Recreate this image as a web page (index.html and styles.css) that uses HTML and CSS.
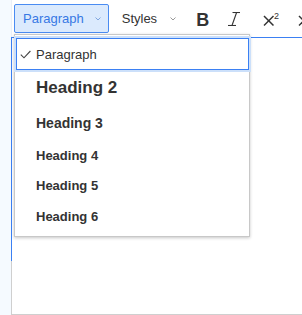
FILE: index.html
```html
<!DOCTYPE html>
<html>
  <head>
    <meta charset="UTF-8">
    <meta name="viewport" content="width=device-width, initial-scale=1.0">
    <title>Heading dropdown</title>
    <link rel="stylesheet" href="styles.css">
  </head>
  <body>

    <div class="page">
      <div class="gutter"></div>

      <div class="editor">
        <!-- toolbar -->
        <div class="toolbar">
          <button class="tb-btn tb-dropdown is-open" type="button">
            <span class="tb-label">Paragraph</span>
            <svg class="chev" width="6" height="4" viewBox="0 0 6 4"><polyline points="0.5,0.5 3,3 5.5,0.5" /></svg>
          </button>
          <button class="tb-btn tb-dropdown tb-styles" type="button">
            <span class="tb-label">Styles</span>
            <svg class="chev" width="6" height="4" viewBox="0 0 6 4"><polyline points="0.5,0.5 3,3 5.5,0.5" /></svg>
          </button>
          <button class="tb-btn tb-bold" type="button"><span>B</span></button>
          <button class="tb-btn tb-italic" type="button">
            <svg width="17" height="14" viewBox="0 0 17 14">
              <line x1="4.5" y1="0.5" x2="12" y2="0.5" />
              <line x1="0" y1="13.5" x2="8" y2="13.5" />
              <line x1="8.6" y1="0.5" x2="4" y2="13.5" />
            </svg>
          </button>
          <button class="tb-btn tb-sup" type="button">
            <svg width="17" height="17" viewBox="0 0 17 17">
              <line x1="1" y1="6" x2="10.5" y2="15.5" />
              <line x1="10.5" y1="6" x2="1" y2="15.5" />
              <text x="11" y="9">2</text>
            </svg>
          </button>
          <button class="tb-btn tb-sub" type="button">
            <svg width="17" height="17" viewBox="0 0 17 17">
              <line x1="1" y1="6" x2="10.5" y2="15.5" />
              <line x1="10.5" y1="6" x2="1" y2="15.5" />
            </svg>
          </button>
        </div>

        <!-- editing area -->
        <div class="content">
          <div class="editable"></div>
          <div class="editable-rest"></div>
        </div>

        <!-- heading list, open over the editing area -->
        <div class="heading-panel">
          <div class="heading-item is-on">
            <svg class="check" width="11" height="9" viewBox="0 0 11 9"><polyline points="0.8,4.6 4,7.8 10.4,1" /></svg>
            <span>Paragraph</span>
          </div>
          <div class="heading-item h2">Heading 2</div>
          <div class="heading-item h3">Heading 3</div>
          <div class="heading-item h4">Heading 4</div>
          <div class="heading-item h5">Heading 5</div>
          <div class="heading-item h6">Heading 6</div>
        </div>
      </div>
    </div>

  </body>
</html>
```

FILE: styles.css
```css
body {
  font-family: "Liberation Sans", Arial, Helvetica, sans-serif;
  margin: 0;
  padding: 0;
  background-color: #fff;
  color: #333;
}

.page {
  display: flex;
  height: 315px;
  overflow: hidden;
}

.gutter {
  width: 11px;
  flex: none;
  background-color: #f5faff;
}

.editor {
  position: relative;
  flex: 1;
  display: flex;
  flex-direction: column;
}

/* toolbar */

.toolbar {
  display: flex;
  align-items: center;
  gap: 4px;
  height: 37px;
  padding-left: 2px;
  border-left: 1px solid #eaf0f7;
  white-space: nowrap;
}

.tb-btn {
  display: flex;
  align-items: center;
  height: 29px;
  margin: 0;
  padding: 0 7px 0 8px;
  border: 1px solid transparent;
  border-radius: 2px;
  background: none;
  font-family: inherit;
  font-size: 13px;
  color: #333;
  flex: none;
}

.tb-dropdown .chev {
  margin-left: 11px;
  fill: none;
  stroke: #999;
  stroke-width: 1;
}

.tb-styles .chev {
  margin-left: 13px;
}

.is-open {
  background-color: #dbeafd;
  border-color: #4a8cf2;
  color: #3778e4;
}

.is-open .chev {
  stroke: #7fa6e0;
}

.tb-bold {
  padding: 0 7px;
  font-size: 18px;
  font-weight: bold;
}

.tb-bold span {
  padding-top: 3px;
}

.tb-italic,
.tb-sup,
.tb-sub {
  padding: 0 6px 0 6px;
}

.tb-italic svg line {
  stroke: #333;
  stroke-width: 1.1;
}

.tb-sup svg line,
.tb-sub svg line {
  stroke: #333;
  stroke-width: 1.5;
}

.tb-sup svg text {
  font-family: "Liberation Sans", Arial, sans-serif;
  font-size: 9px;
  fill: #333;
}

/* editing area */

.content {
  flex: 1;
  display: flex;
  flex-direction: column;
  height: 277px;
  border-bottom: 1px solid #cfcfcf;
}

.editable {
  height: 223px;
  border-top: 1px solid #3b80f3;
  border-left: 1px solid #3b80f3;
}

.editable-rest {
  flex: 1;
  border-left: 1px solid #cfcfcf;
}

/* heading dropdown panel */

.heading-panel {
  position: absolute;
  left: 3px;
  top: 34px;
  width: 234px;
  height: 198px;
  padding-top: 3px;
  background-color: #fff;
  border: 1px solid #c8c8c8;
  box-shadow: 0 1px 3px rgba(0, 0, 0, 0.22);
}

.heading-item {
  display: flex;
  align-items: center;
  margin-left: 1px;
  padding-left: 19px;
  border: 1px solid transparent;
  font-weight: bold;
  color: #333;
  white-space: nowrap;
}

.heading-item.is-on {
  height: 30px;
  padding-left: 3px;
  border-color: #3b80f3;
  box-shadow: 0 0 0 2px #cce0fa;
  font-weight: normal;
  font-size: 13px;
}

.check {
  margin-right: 5px;
  fill: none;
  stroke: #444;
  stroke-width: 1.1;
}

.h2 {
  height: 32px;
  margin-top: 1px;
  font-size: 17px;
}

.h3 {
  height: 33px;
  font-size: 14px;
}

.h4 {
  height: 28px;
  font-size: 13px;
}

.h5 {
  height: 29px;
  font-size: 13px;
}

.h6 {
  height: 29px;
  font-size: 13px;
}
```
